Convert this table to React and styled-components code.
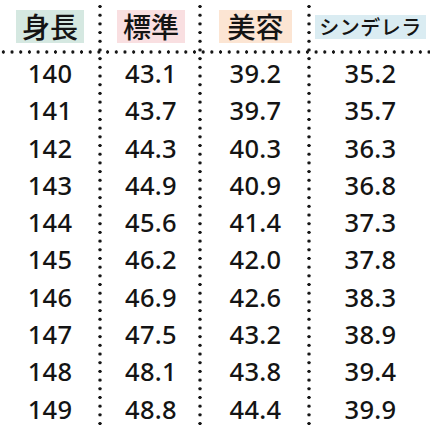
import React from "react";
import styled, { createGlobalStyle } from "styled-components";

const GlobalStyle = createGlobalStyle`
  html, body {
    margin: 0;
    padding: 0;
    background: #ffffff;
  }
  body {
    font-family: "Noto Sans", "Noto Sans CJK JP", sans-serif;
    color: #141414;
  }
`;

const DOT = "radial-gradient(circle, #161616 1.45px, transparent 1.9px)";

const Table = styled.div`
  width: 430px;
  height: 430px;
  overflow: hidden;
  display: grid;
  grid-template-columns: 102px 100px 109px 1fr;
  background-image: ${DOT};
  background-size: 8.7px 4px;
  background-position: -1px 50.3px;
  background-repeat: repeat-x;
`;

const Column = styled.div`
  display: flex;
  flex-direction: column;
  align-items: center;
  background-image: ${(p) => (p.$last ? "none" : DOT)};
  background-size: 4px 8.7px;
  background-position: right 2.2px;
  background-repeat: repeat-y;
  padding-right: ${(p) => (p.$last ? "0" : "2px")};
`;

const Head = styled.div`
  height: 52px;
  display: flex;
  align-items: center;
  justify-content: center;
  width: 100%;
`;

const Label = styled.span`
  display: inline-block;
  background: ${(p) => p.$bg};
  font-family: "Noto Sans CJK JP", sans-serif;
  font-weight: 500;
  font-size: ${(p) => (p.$small ? "20px" : "28px")};
  line-height: ${(p) => (p.$small ? "24px" : "33px")};
  padding: 0 ${(p) => p.$pad}px;
  margin-top: ${(p) => (p.$small ? "2px" : "1px")};
  letter-spacing: ${(p) => (p.$small ? "0.5px" : "0")};
`;

const Body = styled.div`
  padding-top: 3px;
  display: flex;
  flex-direction: column;
  align-items: center;
`;

const Cell = styled.div`
  height: 37.3px;
  line-height: 37.3px;
  font-size: 25.5px;
  font-weight: 500;
  letter-spacing: 0.3px;
`;

const columns = [
  {
    title: "身長",
    bg: "#d5e8e1",
    pad: 6,
    values: ["140", "141", "142", "143", "144", "145", "146", "147", "148", "149"],
  },
  {
    title: "標準",
    bg: "#f9dfe1",
    pad: 6,
    values: ["43.1", "43.7", "44.3", "44.9", "45.6", "46.2", "46.9", "47.5", "48.1", "48.8"],
  },
  {
    title: "美容",
    bg: "#fce5d3",
    pad: 8,
    values: ["39.2", "39.7", "40.3", "40.9", "41.4", "42.0", "42.6", "43.2", "43.8", "44.4"],
  },
  {
    title: "シンデレラ",
    bg: "#daecf2",
    pad: 4,
    small: true,
    values: ["35.2", "35.7", "36.3", "36.8", "37.3", "37.8", "38.3", "38.9", "39.4", "39.9"],
  },
];

export default function App() {
  return (
    <>
      <GlobalStyle />
      <Table>
        {columns.map((col, i) => (
          <Column key={col.title} $last={i === columns.length - 1}>
            <Head>
              <Label $bg={col.bg} $pad={col.pad} $small={col.small}>
                {col.title}
              </Label>
            </Head>
            <Body>
              {col.values.map((v) => (
                <Cell key={v}>{v}</Cell>
              ))}
            </Body>
          </Column>
        ))}
      </Table>
    </>
  );
}
